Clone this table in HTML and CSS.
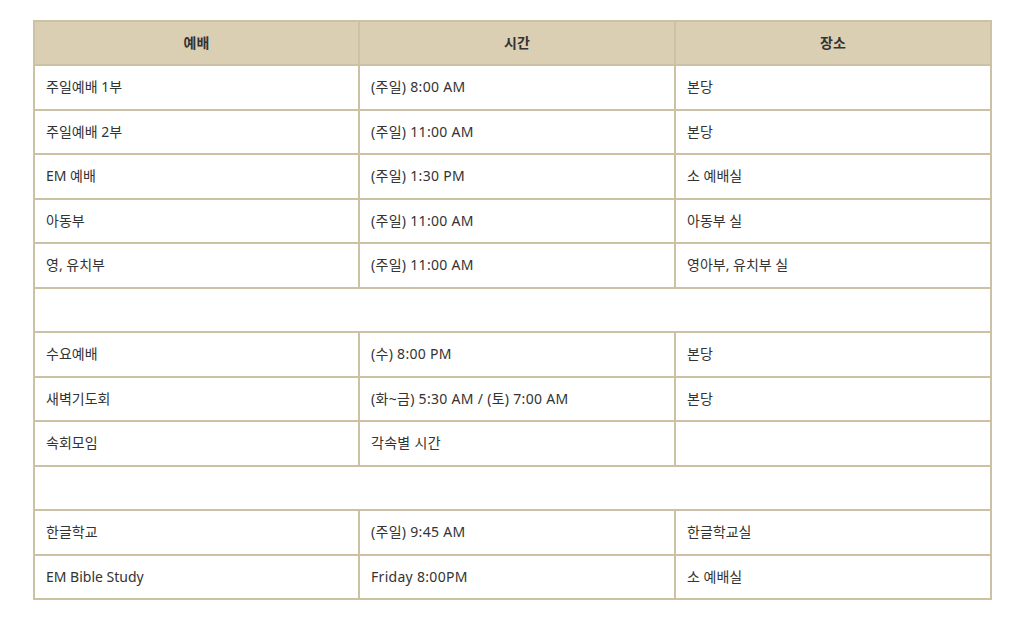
FILE: index.html
```html
<!DOCTYPE html>
<html lang="ko">
<head>
<meta charset="utf-8">
<link rel="stylesheet" href="styles.css">
</head>
<body>
<div class="wrap">
<table class="schedule">
  <colgroup><col class="c1"><col class="c2"><col class="c3"></colgroup>
  <thead>
    <tr><th>예배</th><th>시간</th><th>장소</th></tr>
  </thead>
  <tbody>
    <tr><td>주일예배 1부</td><td class="time">(주일) 8:00 AM</td><td>본당</td></tr>
    <tr><td>주일예배 2부</td><td class="time">(주일) 11:00 AM</td><td>본당</td></tr>
    <tr><td>EM 예배</td><td class="time">(주일) 1:30 PM</td><td>소 예배실</td></tr>
    <tr><td>아동부</td><td class="time">(주일) 11:00 AM</td><td>아동부 실</td></tr>
    <tr><td>영, 유치부</td><td class="time">(주일) 11:00 AM</td><td>영아부, 유치부 실</td></tr>
    <tr class="blank"><td colspan="3"></td></tr>
    <tr><td>수요예배</td><td class="time">(수) 8:00 PM</td><td>본당</td></tr>
    <tr><td>새벽기도회</td><td class="time">(화~금) 5:30 AM / (토) 7:00 AM</td><td>본당</td></tr>
    <tr><td>속회모임</td><td class="time">각속별 시간</td><td></td></tr>
    <tr class="blank"><td colspan="3"></td></tr>
    <tr><td>한글학교</td><td class="time">(주일) 9:45 AM</td><td>한글학교실</td></tr>
    <tr><td>EM Bible Study</td><td class="time">Friday 8:00PM</td><td>소 예배실</td></tr>
  </tbody>
</table>
</div>
</body>
</html>
```
FILE: styles.css
```css
html, body {
  margin: 0;
  padding: 0;
  background: #ffffff;
}
.wrap {
  padding: 20px 33px;
}
.schedule {
  width: 957px;
  border-collapse: collapse;
  table-layout: fixed;
  font-family: "Noto Sans", "Noto Sans CJK KR", sans-serif;
  font-size: 14px;
  color: #333333;
  border: 2px solid #cdc1a4;
}
.c1 { width: 325px; }
.c2 { width: 316px; }
.c3 { width: 316px; }
.schedule th,
.schedule td {
  border: 2px solid #cdc1a4;
  height: 42.5px;
  padding: 0 11px;
  text-align: left;
  vertical-align: middle;
  line-height: 20px;
}
.schedule td.time {
  letter-spacing: 0.3px;
}
.schedule th {
  background: #dbcfb3;
  text-align: center;
  font-weight: 700;
  color: #333333;
  height: 42px;
}
```
